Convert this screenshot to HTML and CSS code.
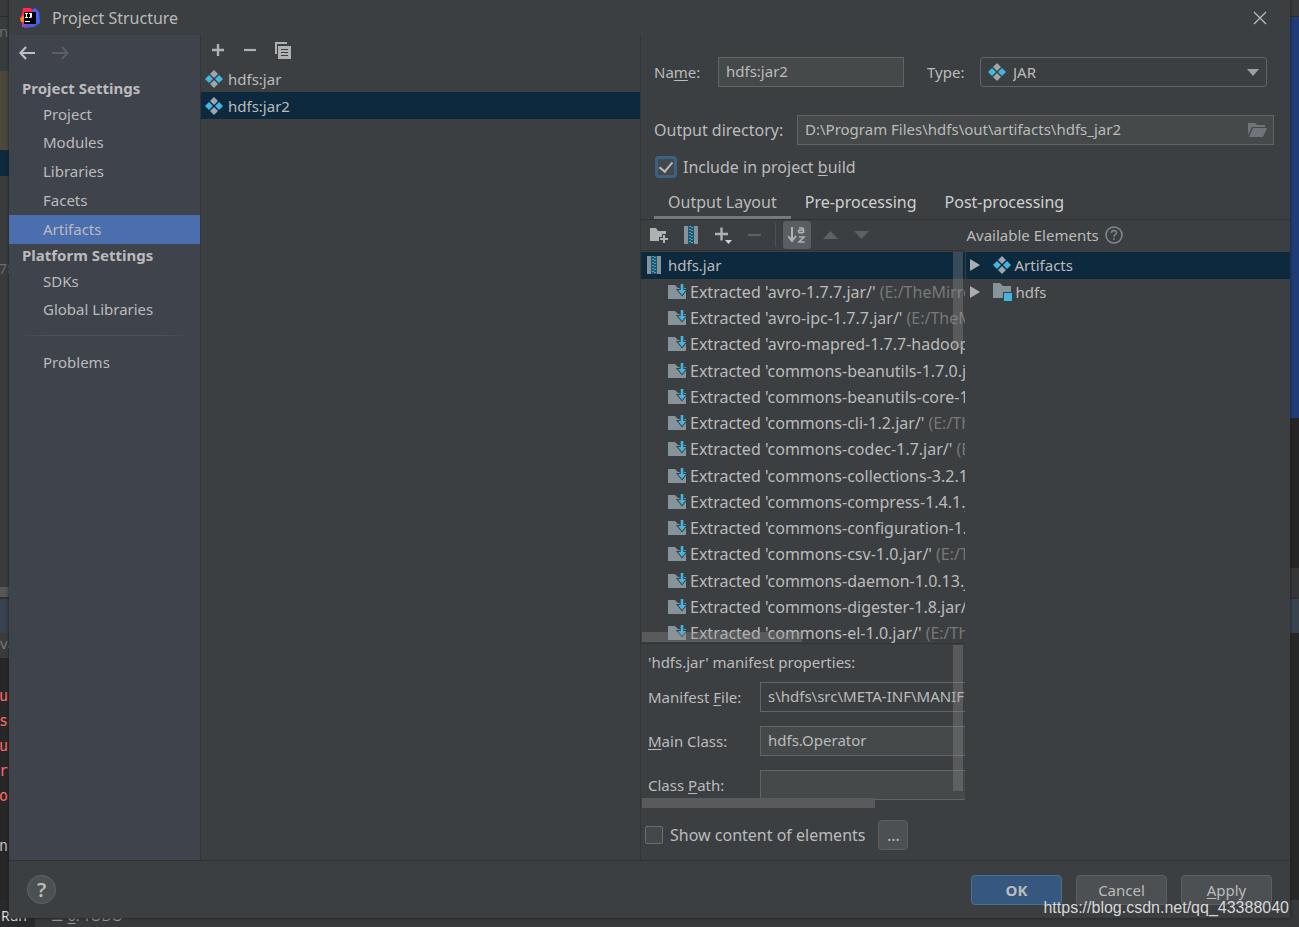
FILE: index.html
```html
<!DOCTYPE html>
<html lang="en">
<head>
<meta charset="utf-8">
<title>Project Structure</title>
<link rel="stylesheet" href="styles.css">
</head>
<body>
<svg class="defs" aria-hidden="true">
  <symbol id="artifact" viewBox="0 0 18 18">
    <path fill="#9aa7b0" d="M9 0l4 4-4 4-4-4zM9 10l4 4-4 4-4-4z"/>
    <path fill="#40b6e0" d="M4 5l4 4-4 4-4-4zM14 5l4 4-4 4-4-4z"/>
  </symbol>
  <symbol id="archive" viewBox="0 0 14 18">
    <path fill="#87939a" d="M0 0h4v18H0zM10 0h4v18h-4z"/>
    <path fill="#24556a" d="M4 0h6v18H4z"/>
    <path fill="#40a6cc" d="M5 0h2v1H5zM7 1h2v1H7zM5 3h2v1H5zM7 4h2v1H7zM5 6h2v1H5zM7 7h2v1H7zM5 9h2v1H5zM7 10h2v1H7zM5 12h2v1H5zM7 13h2v1H7zM5 15h2v1H5zM7 16h2v1H7z"/>
  </symbol>
  <symbol id="extracted" viewBox="0 0 18 16">
    <path fill="#87939a" d="M0 1h7l3 3h8v11H0z"/>
    <path fill="#40b6e0" stroke="#3c3f41" stroke-width="2" paint-order="stroke" d="M12.700 0h2.600v6H18l-4 5-4-5h2.700z"/>
  </symbol>
</svg>

<div class="ide" aria-hidden="true">
  <div class="edge edge-left">
    <div class="e-top"></div>
    <div class="e-tree">n</div>
    <div class="e-brown"></div>
    <div class="e-navy"></div>
    <div class="e-files">78</div>
    <div class="e-thumb"></div>
    <div class="e-head"></div>
    <div class="e-cmd">va</div>
    <div class="e-console"><p>u</p><p>se</p><p>u</p><p>re</p><p>ov</p><p></p><p class="plain">n</p></div>
  </div>
  <div class="edge edge-right">
    <div class="e-top"></div>
    <div class="e-blue"></div>
    <div class="e-dark"></div>
    <div class="e-bar"></div>
    <div class="e-head"></div>
    <div class="e-console"></div>
  </div>
  <div class="toolbar-bottom"><span class="run">Run</span><span class="todo">☰ <u>6</u>: TODO</span></div>
</div>

<main class="dialog">
  <header class="title-bar">
    <svg class="logo" viewBox="0 0 20 20">
      <linearGradient id="lb" x1="0" y1="1" x2="1" y2="0"><stop offset="0" stop-color="#7b45d8"/><stop offset=".6" stop-color="#2f6bf2"/><stop offset="1" stop-color="#6a57ff"/></linearGradient>
      <path fill="#fe2857" d="M3 0h8l2 4-9 9-3-3z"/>
      <path fill="#fc801d" d="M0 10l4-3 1 8-4-1z"/>
      <path fill="#b33dc0" d="M2 14l5 1 5 3-6 1-4 0z"/>
      <path fill="url(#lb)" d="M12 2l3-2 4 4 1 11-6 4-10 1 2-5 7-1z"/>
      <path d="M4 4h12v12H4z"/>
      <path fill="#fff" d="M5 5h3v1H7v3h1v1H5V9h1V6H5zM9 5h3v4l-1 1H9V9h1V6H9zM5 13h5v1H5z"/>
    </svg>
    <h1>Project Structure</h1>
    <button class="icon-btn" aria-label="Close"><svg width="14" height="14" viewBox="0 0 14 14"><path d="M1 1l12 12M13 1L1 13" stroke="#bbb" stroke-width="1.300"/></svg></button>
  </header>

  <div class="content">
    <nav class="sidebar">
      <div class="history">
        <button class="icon-btn" aria-label="Back"><svg width="18" height="14" viewBox="0 0 18 14"><path d="M16 7H2M7 1L1.500 7 7 13" fill="none" stroke="#bcbec0" stroke-width="2.200"/></svg></button>
        <button class="icon-btn" aria-label="Forward"><svg width="18" height="14" viewBox="0 0 18 14"><path d="M0 7h15M10 1l5.500 6L10 13" fill="none" stroke="#5d5f62" stroke-width="2"/></svg></button>
      </div>
      <h2>Project Settings</h2>
      <a href="#project">Project</a>
      <a href="#modules">Modules</a>
      <a href="#libraries">Libraries</a>
      <a href="#facets">Facets</a>
      <a href="#artifacts" class="current" aria-current="page">Artifacts</a>
      <h2>Platform Settings</h2>
      <a href="#sdks">SDKs</a>
      <a href="#global">Global Libraries</a>
      <hr>
      <a href="#problems">Problems</a>
    </nav>

    <section class="artifacts">
      <div class="list-tools">
        <button class="icon-btn" aria-label="Add"><svg width="14" height="14" viewBox="0 0 14 14"><path d="M1 7h12M7 1v12" stroke="#afb1b3" stroke-width="2.400"/></svg></button>
        <button class="icon-btn" aria-label="Remove"><svg width="14" height="14" viewBox="0 0 14 14"><path d="M1 7h12" stroke="#afb1b3" stroke-width="2.200"/></svg></button>
        <button class="icon-btn" aria-label="Copy"><svg width="16" height="17" viewBox="0 0 16 17"><path fill="#afb1b3" d="M0 0h12v2H2v10H0z"/><path fill="#afb1b3" fill-rule="evenodd" d="M3 4h13v13H3zM6 7v1h7V7zM6 10v1h7v-1zM6 13v1h7v-1z"/></svg></button>
      </div>
      <ul class="artifact-list">
        <li><svg class="i18"><use href="#artifact"/></svg>hdfs:jar</li>
        <li class="selected"><svg class="i18"><use href="#artifact"/></svg>hdfs:jar2</li>
      </ul>
    </section>

    <section class="editor">
      <div class="form-row name-row">
        <label for="name">Na<u>m</u>e:</label>
        <input id="name" class="field name-field" type="text" value="hdfs:jar2">
        <label for="type" class="type-label">Type:</label>
        <div class="combo">
          <svg class="i18"><use href="#artifact"/></svg>
          <select id="type"><option>JAR</option></select>
          <svg class="arrow" viewBox="0 0 12 7"><path fill="#9da0a2" d="M0 0h12L6 7z"/></svg>
        </div>
      </div>
      <div class="form-row dir-row">
        <label for="dir">Output directory:</label>
        <div class="dir-box">
          <input id="dir" class="field" type="text" value="D:\Program Files\hdfs\out\artifacts\hdfs_jar2">
          <button class="icon-btn" aria-label="Browse"><svg width="19" height="14" viewBox="0 0 19 14"><path fill="#6e7477" d="M0 0h7l2 2h8v2H4L0 12z"/><path fill="#6e7477" d="M5 5h14l-4 9H1z"/></svg></button>
        </div>
      </div>
      <div class="form-row check-row">
        <input id="include" class="check focused" type="checkbox" checked>
        <label for="include">Include in project <u>b</u>uild</label>
      </div>
      <div class="tabs" role="tablist">
        <button class="tab active" role="tab" aria-selected="true">Output Layout</button>
        <button class="tab" role="tab">Pre-processing</button>
        <button class="tab" role="tab">Post-processing</button>
      </div>

      <div class="split">
        <div class="pane layout-pane">
          <div class="pane-tools">
            <button class="icon-btn" aria-label="New folder"><svg width="18" height="15" viewBox="0 0 18 15"><path fill="#afb1b3" d="M0 0h6l2 3h8v3h-4v3H9v4H0z"/><path d="M14 7v8M10 11h8" stroke="#afb1b3" stroke-width="2"/></svg></button>
            <button class="icon-btn" aria-label="New archive"><svg class="i14"><use href="#archive"/></svg></button>
            <button class="icon-btn" aria-label="Add copy"><svg width="18" height="18" viewBox="0 0 18 18"><path d="M1 8h13M7.500 1.500v13" stroke="#afb1b3" stroke-width="2.400"/><path fill="#d0d2d3" d="M11 14h7l-3.500 4z"/></svg></button>
            <button class="icon-btn" aria-label="Remove"><svg width="13" height="14" viewBox="0 0 13 14"><path d="M0 7h13" stroke="#5e6062" stroke-width="2.200"/></svg></button>
            <span class="divider"></span>
            <button class="icon-btn sort" aria-label="Sort by name"><svg width="18" height="18" viewBox="0 0 18 18"><path d="M4 1v13M0 10l4 5 4-5" fill="none" stroke="#afb1b3" stroke-width="2"/><path d="M11 2h3.500q1 0 1 1v4M15 4h-3.500q-1 0-1 1v.6q0 1 1 1H15M11 11h5l-5 5h5.500" fill="none" stroke="#afb1b3" stroke-width="1.600"/></svg></button>
            <button class="icon-btn" aria-label="Move up"><svg width="15" height="8" viewBox="0 0 15 8"><path fill="#5e6062" d="M0 8h15L7.500 0z"/></svg></button>
            <button class="icon-btn" aria-label="Move down"><svg width="15" height="8" viewBox="0 0 15 8"><path fill="#5e6062" d="M0 0h15L7.500 8z"/></svg></button>
          </div>
          <div class="tree">
            <div class="root selected"><svg class="i14"><use href="#archive"/></svg>hdfs.jar</div>
            <ul>
              <li><svg class="iext"><use href="#extracted"/></svg>Extracted 'avro-1.7.7.jar/' <span>(E:/TheMirror)</span></li>
              <li><svg class="iext"><use href="#extracted"/></svg>Extracted 'avro-ipc-1.7.7.jar/' <span>(E:/TheMirror)</span></li>
              <li><svg class="iext"><use href="#extracted"/></svg>Extracted 'avro-mapred-1.7.7-hadoop2.jar/'</li>
              <li><svg class="iext"><use href="#extracted"/></svg>Extracted 'commons-beanutils-1.7.0.jar/'</li>
              <li><svg class="iext"><use href="#extracted"/></svg>Extracted 'commons-beanutils-core-1.8.0.jar/'</li>
              <li><svg class="iext"><use href="#extracted"/></svg>Extracted 'commons-cli-1.2.jar/' <span>(E:/TheMirror)</span></li>
              <li><svg class="iext"><use href="#extracted"/></svg>Extracted 'commons-codec-1.7.jar/' <span>(E:/TheMirror)</span></li>
              <li><svg class="iext"><use href="#extracted"/></svg>Extracted 'commons-collections-3.2.1.jar/'</li>
              <li><svg class="iext"><use href="#extracted"/></svg>Extracted 'commons-compress-1.4.1.jar/'</li>
              <li><svg class="iext"><use href="#extracted"/></svg>Extracted 'commons-configuration-1.6.jar/'</li>
              <li><svg class="iext"><use href="#extracted"/></svg>Extracted 'commons-csv-1.0.jar/' <span>(E:/TheMirror)</span></li>
              <li><svg class="iext"><use href="#extracted"/></svg>Extracted 'commons-daemon-1.0.13.jar/'</li>
              <li><svg class="iext"><use href="#extracted"/></svg>Extracted 'commons-digester-1.8.jar/'</li>
              <li><svg class="iext"><use href="#extracted"/></svg>Extracted 'commons-el-1.0.jar/' <span>(E:/TheMirror)</span></li>
            </ul>
            <i class="thumb tree-v"></i><i class="thumb tree-h"></i>
          </div>
          <div class="manifest">
            <p>'hdfs.jar' manifest properties:</p>
            <div class="props">
              <label for="mf">Manifest <u>F</u>ile:</label><input id="mf" class="field flat" type="text" readonly value="s\hdfs\src\META-INF\MANIFEST.MF">
              <label for="mc"><u>M</u>ain Class:</label><input id="mc" class="field" type="text" value="hdfs.Operator">
              <label for="cp">Class <u>P</u>ath:</label><input id="cp" class="field" type="text">
            </div>
            <i class="thumb man-v"></i><i class="thumb man-h"></i>
          </div>
        </div>
        <div class="pane">
          <div class="avail-head">Available Elements <svg width="18" height="18" viewBox="0 0 18 18"><circle cx="9" cy="9" r="8" fill="none" stroke="#7f8b91" stroke-width="1.500"/><path d="M6.500 7q0-2.500 2.500-2.500t2.500 2.200q0 1.300-1.400 2Q9 9.400 9 10.800M9 12v1.700" fill="none" stroke="#7f8b91" stroke-width="1.500"/></svg></div>
          <ul class="avail">
            <li class="selected"><svg class="tri" viewBox="0 0 10 12"><path d="M0 0l10 6-10 6z" fill="#adadad"/></svg><svg class="i18"><use href="#artifact"/></svg>Artifacts</li>
            <li><svg class="tri" viewBox="0 0 10 12"><path d="M0 0l10 6-10 6z" fill="#adadad"/></svg><svg class="i19" viewBox="0 0 19 18"><path fill="#87939a" d="M0 0h7l3 3h8v6h-8v6H0z"/><path fill="#40b6e0" d="M11 10h8v8h-8z"/></svg>hdfs</li>
          </ul>
        </div>
      </div>
      <div class="form-row show-row">
        <input id="show" class="check" type="checkbox">
        <label for="show">Show content of elements</label>
        <button class="btn more" aria-label="More options">...</button>
      </div>
    </section>
  </div>

  <footer class="footer">
    <button class="help" aria-label="Help">?</button>
    <button class="btn primary">OK</button>
    <button class="btn">Cancel</button>
    <button class="btn"><u>A</u>pply</button>
  </footer>
</main>
<div class="watermark">https://blog.csdn.net/qq_43388040</div>
</body>
</html>
```
FILE: styles.css
```css
* { box-sizing: border-box; }
body {
  margin: 0;
  height: 100vh;
  overflow: hidden;
  position: relative;
  background: #2b2b2b;
  color: #bbbbbb;
  font: 15px/20px "Noto Sans", "Open Sans", sans-serif;
}
button, input, select { font: inherit; color: inherit; }
h1, h2, p, ul { margin: 0; padding: 0; }
ul { list-style: none; }
u { text-underline-offset: 2px; }
svg { flex: none; display: block; }
.defs { position: absolute; width: 0; height: 0; }
.i18 { width: 18px; height: 18px; }
.i19 { width: 19px; height: 18px; }
.i14 { width: 14px; height: 18px; }
.iext { width: 18px; height: 16px; }
.selected { background: #0d293e; }
.icon-btn { display: flex; padding: 0; border: 0; background: none; }

/* IDE window showing around the dialog */
.ide { position: absolute; inset: 0; overflow: hidden; }
.edge { position: absolute; top: 0; bottom: 0; width: 9px; overflow: hidden; display: flex; flex-direction: column; }
.edge > div { flex: none; }
.edge-left { left: 0; }
.edge-right { right: 0; }
.e-top { height: 17px; background: #383a3c; border-bottom: 1px solid #2b2b2b; }
.e-tree { height: 54px; padding-top: 4px; background: #393c3e; color: #6c6c6c; }
.e-brown { height: 79px; background: #4b473b; }
.e-navy { height: 26px; background: #0d293e; }
.e-files { height: 411px; padding-top: 83px; background: #393b3d; color: #6c6c6c; font-size: 14px; }
.e-thumb { height: 10px; background: #555657; }
.e-head { height: 36px; background: #38434f; border-top: 2px solid #2e3031; }
.e-cmd { height: 25px; background: #393b3d; color: #777777; }
.edge > .e-console { flex: 1; padding-top: 26px; color: #ff6b68; font: 15px/25px "DejaVu Sans Mono", monospace; background: #272727; }
.e-tree, .e-files, .e-console { text-indent: -1px; }
.e-console p { height: 25px; }
.plain { color: #bbbbbb; }
.e-blue { height: 401px; background: #1f3c79; }
.e-dark { height: 150px; background: #252525; }
.e-bar { height: 29px; background: #343638; }
.toolbar-bottom { position: absolute; left: 0; right: 0; bottom: 0; height: 27px; display: flex; background: #37393b; color: #999999; }
.run { width: 35px; background: #292a2b; color: #dddddd; padding: 6px 0 0 1px; font-size: 14px; }
.todo { padding: 6px 0 0 16px; font-size: 14px; }

.dialog {
  position: relative;
  height: calc(100vh - 9px);
  margin: 0 9px;
  display: flex;
  flex-direction: column;
  background: #3c3f41;
  box-shadow: 0 0 3px #1b1b1b;
}
.title-bar { height: 35px; display: flex; align-items: center; gap: 12px; padding: 0 23px 0 11px; }
.title-bar h1 { flex: 1; font-size: 16px; font-weight: 400; }
.logo { width: 20px; height: 20px; }
.content { flex: 1; min-height: 0; display: flex; }

.sidebar { width: 192px; background: #3f434c; border-right: 1px solid #323436; display: flex; flex-direction: column; }
.history { height: 41px; padding: 11px 10px 0; display: flex; gap: 15px; }
.sidebar h2 { height: 24px; padding-left: 13px; font-size: 15px; line-height: 24px; }
.sidebar a { height: 29px; padding-left: 34px; line-height: 28px; color: inherit; text-decoration: none; }
.sidebar a + h2 { height: 23px; line-height: 22px; }
.sidebar h2 + a { height: 28px; }
.sidebar .current { background: #4b6eaf; }
.sidebar hr { width: 172px; height: 1px; margin: 11px auto 12px; border: 0; background: linear-gradient(90deg, transparent, #545454 20%, #545454 80%, transparent); }

.artifacts { flex: 1; border-right: 1px solid #323436; }
.list-tools { height: 30px; display: flex; align-items: center; gap: 18px; padding-left: 10px; }
.artifact-list li { height: 27px; display: flex; align-items: center; gap: 5px; padding-left: 4px; }

.editor { flex: 0 1 649px; min-width: 0; display: flex; flex-direction: column; }
.form-row { flex: none; display: flex; align-items: center; }
.field { height: 30px; min-width: 0; padding: 0 7px 2px; background: #45494a; border: 1px solid #646464; border-radius: 0; outline: 0; }
.name-row { padding: 22px 23px 0 13px; }
.name-row > label { width: 64px; }
.name-field { flex: 0 1 186px; }
.name-row .type-label { width: 53px; margin-left: 23px; }
.combo { flex: 1; position: relative; display: flex; align-items: center; }
.combo select { width: 100%; height: 30px; padding: 0 32px; appearance: none; background: none; border: 1px solid #646464; border-radius: 3px; outline: 0; }
.combo .i18 { position: absolute; left: 8px; }
.combo .arrow { position: absolute; right: 8px; width: 12px; height: 7px; }
.dir-row { padding: 28px 16px 0 13px; }
.dir-row label { width: 143px; font-size: 16px; }
.dir-box { flex: 1; position: relative; display: flex; align-items: center; }
.dir-box .field { width: 100%; }
.dir-box .icon-btn { position: absolute; right: 7px; }
.check-row { padding: 11px 14px 0; height: 32px; gap: 6px; font-size: 16px; }
.check { appearance: none; flex: none; width: 18px; height: 18px; margin: 0; background: #43494a; border: 1px solid #6b6b6b; border-radius: 2px; display: grid; place-items: center; }
.check.focused { width: 22px; height: 22px; border: 3px solid #3d6185; border-radius: 4px; }
.check:checked::before { content: ""; width: 6px; height: 11px; margin-bottom: 3px; border: solid #bbbbbb; border-width: 0 2px 2px 0; transform: rotate(40deg); }
.tabs { height: 43px; display: flex; align-items: flex-end; padding-left: 13px; border-bottom: 1px solid #323232; font-size: 16px; }
.tab { height: 34px; padding: 2px 14px 0; background: none; border: 0; border-bottom: 3px solid transparent; color: #d0d0d0; }
.tab.active { border-bottom-color: #747a80; color: inherit; }

.split { flex: 1; min-height: 0; display: grid; grid-template-columns: 1fr 1fr; }
.pane { min-width: 0; min-height: 0; display: flex; flex-direction: column; overflow: hidden; white-space: nowrap; }
.layout-pane { margin-right: 1px; }
.pane-tools { flex: none; height: 31px; margin-bottom: 1px; display: flex; align-items: center; gap: 16px; padding-left: 9px; border-bottom: 1px solid #323232; }
.divider { width: 1px; height: 24px; margin: 0 -9px 0 -2px; background: #515151; }
.sort { width: 28px; height: 28px; align-items: center; justify-content: center; background: #5a5e60; border-radius: 3px; margin-right: -4px; }
.tree { flex: 1; min-height: 0; position: relative; overflow: hidden; }
.root { height: 27px; display: flex; align-items: center; gap: 7px; padding: 0 0 1px 6px; }
.tree li { height: 26px; display: flex; align-items: center; gap: 4px; padding-left: 27px; font-size: 16px; }
.tree li:nth-child(4n) { height: 27px; }
.tree li span { color: #787878; }
.thumb { position: absolute; background: rgba(150, 150, 150, .32); }
.tree-v { top: 0; right: 2px; width: 10px; height: 96px; }
.tree-h { left: 1px; bottom: 1px; width: 160px; height: 10px; }
.manifest { flex: none; height: 165px; position: relative; overflow: hidden; border-top: 1px solid #323232; padding: 8px 0 0 7px; }
.props { width: 460px; margin-top: 10px; display: grid; grid-template-columns: 112px 1fr; row-gap: 14px; align-items: center; }
.flat { background: none; }
.man-v { top: 1px; right: 2px; width: 10px; height: 146px; }
.man-h { left: 1px; bottom: 0; width: 233px; height: 10px; background: #595a5b; }
.avail-head { flex: none; height: 30px; margin-bottom: 2px; display: flex; align-items: center; gap: 6px; padding-left: 1px; }
.avail li { height: 27px; display: flex; align-items: center; gap: 4px; padding: 0 0 1px 4px; }
.tri { width: 10px; height: 12px; margin-right: 9px; }
.show-row { height: 52px; padding: 1px 0 0 4px; gap: 7px; font-size: 16px; }

.btn { width: 91px; height: 30px; padding: 0; background: #4c5052; border: 1px solid #5e6060; border-radius: 4px; }
.more { width: 30px; margin-left: 6px; }
.primary { background: #365880; border-color: #4c708c; font-weight: 700; }
.footer { flex: none; height: 58px; display: flex; align-items: center; gap: 14px; padding: 0 18px; border-top: 1px solid #323232; }
.help { width: 29px; height: 29px; margin-right: auto; padding: 0; border: 1px solid #616365; border-radius: 50%; background: #4c5052; font-size: 20px; font-weight: 600; line-height: 26px; }
.watermark { position: absolute; right: 10px; bottom: 9px; color: #d8d8d8; font: 16px/20px "Liberation Sans", Arial, sans-serif; }
```
